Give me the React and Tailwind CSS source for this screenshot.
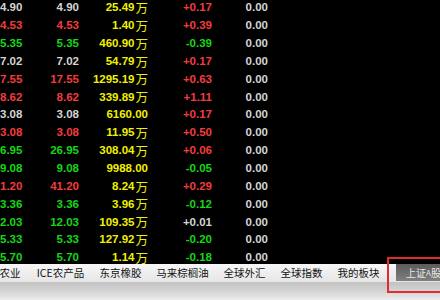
import React from 'react';

const C = {
  w: 'text-[#d4d4d4]',
  r: 'text-[#f23c3c]',
  g: 'text-[#16d616]',
};

// [col1, col2, colour of 1&2, amount, unit wan, change, change colour]
const rows = [
  ['4.90', '4.90', 'w', '25.49', true, '+0.17', 'r'],
  ['4.53', '4.53', 'r', '1.40', true, '+0.39', 'r'],
  ['5.35', '5.35', 'g', '460.90', true, '-0.39', 'g'],
  ['7.02', '7.02', 'w', '54.79', true, '+0.17', 'r'],
  ['7.55', '17.55', 'r', '1295.19', true, '+0.63', 'r'],
  ['8.62', '8.62', 'r', '339.89', true, '+1.11', 'r'],
  ['3.08', '3.08', 'w', '6160.00', false, '+0.17', 'r'],
  ['3.08', '3.08', 'r', '11.95', true, '+0.50', 'r'],
  ['6.95', '26.95', 'g', '308.04', true, '+0.06', 'r'],
  ['9.08', '9.08', 'g', '9988.00', false, '-0.05', 'g'],
  ['1.20', '41.20', 'r', '8.24', true, '+0.29', 'r'],
  ['3.36', '3.36', 'g', '3.96', true, '-0.12', 'g'],
  ['2.03', '12.03', 'g', '109.35', true, '+0.01', 'w'],
  ['5.33', '5.33', 'g', '127.92', true, '-0.20', 'g'],
  ['5.70', '5.70', 'g', '1.14', true, '-0.18', 'g'],
];

const tabs = [
  { label: '农业', w: 'w-[20px]' },
  { label: 'ICE农产品', w: 'w-[45px]' },
  { label: '东京橡胶', w: 'w-[39px]' },
  { label: '马来棕榈油', w: 'w-[49px]' },
  { label: '全球外汇', w: 'w-[39px]' },
  { label: '全球指数', w: 'w-[39px]' },
  { label: '我的板块', w: 'w-[39px]' },
];

function Row({ row }) {
  const [a, b, c, amt, wan, chg, cc] = row;
  return (
    <div className="flex h-[17.86px] items-center whitespace-nowrap">
      <div className={`w-[22px] text-right ${C[c]}`}>{a}</div>
      <div className={`w-[57px] text-right ${C[c]}`}>{b}</div>
      <div className="flex w-[69px] items-center justify-end text-[#f0f000]">
        <span>{amt}</span>
        {wan ? (
          <span className="ml-px font-['Noto_Sans_CJK_SC',sans-serif] text-[12.5px] leading-[14px] font-normal">万</span>
        ) : null}
      </div>
      <div className={`w-[64px] text-right ${C[cc]}`}>{chg}</div>
      <div className="w-[56px] text-right text-[#d4d4d4]">0.00</div>
    </div>
  );
}

export default function App() {
  return (
    <div className="relative h-[300px] w-[440px] overflow-hidden bg-black">
      <div className="h-[264px] overflow-hidden font-['Liberation_Sans',Arial,sans-serif] text-[11.5px] font-bold">
        <div className="-mt-[1px]">
          {rows.map((r, i) => (
            <Row key={i} row={r} />
          ))}
        </div>
      </div>

      <div className="font-['Noto_Sans_CJK_SC',sans-serif] text-[10.5px]">
        <div className="flex h-[18px] items-center whitespace-nowrap bg-gradient-to-b from-[#f7f7f7] to-[#e6e6e6] text-[#111]">
          {tabs.map((t) => (
            <React.Fragment key={t.label}>
              <span className={`${t.w} flex justify-center`}>{t.label}</span>
              <span className="mx-[9px] h-[7px] w-px bg-[#b4b4b4]" />
            </React.Fragment>
          ))}
          <div className="flex h-[17px] flex-1 items-center self-start bg-gradient-to-b from-[#5c5c5c] to-[#808080] pl-[10px] text-[10px] text-[#e8e8e8]">
            上证<span className="text-[8px]">A</span>股
          </div>
        </div>
        <div className="h-[18px] bg-gradient-to-b from-[#c2c2c2] via-[#d4d4d4] to-[#ececec]" />
      </div>

      <div className="absolute left-[387px] top-[257px] h-[36px] w-[70px] border-2 border-[#e52a2a]" />
    </div>
  );
}
